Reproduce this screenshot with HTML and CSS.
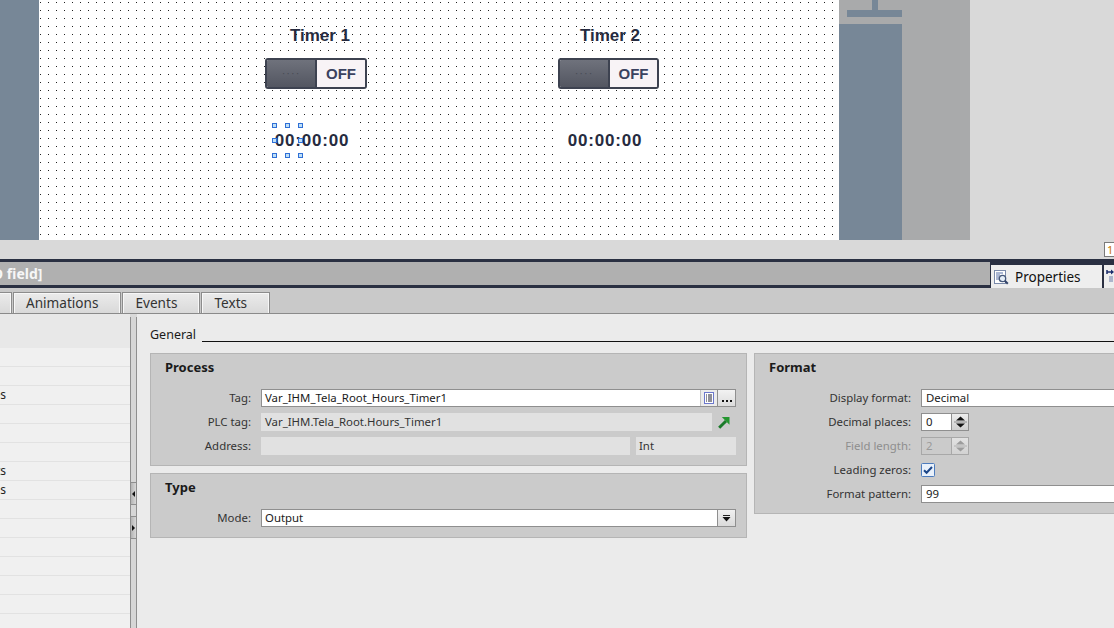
FILE: index.html
```html
<!DOCTYPE html>
<html lang="en">
<head>
<meta charset="utf-8">
<title>HMI editor - IO field properties</title>
<link rel="stylesheet" href="styles.css">
</head>
<body>
<div class="app">
  <div class="editor">
    <div class="editor-row">
      <div class="side-strip"></div>
      <div class="canvas">
        <div class="hmi-label t1">Timer 1</div>
        <div class="hmi-switch s1"><span class="sw-knob">····</span><span class="sw-state">OFF</span></div>
        <div class="hmi-io f1">00:00:00</div>
        <div class="selection">
          <span class="h h-tl"></span><span class="h h-tc"></span><span class="h h-tr"></span>
          <span class="h h-ml"></span><span class="h h-mr"></span>
          <span class="h h-bl"></span><span class="h h-bc"></span><span class="h h-br"></span>
        </div>
        <div class="hmi-label t2">Timer 2</div>
        <div class="hmi-switch s2"><span class="sw-knob">····</span><span class="sw-state">OFF</span></div>
        <div class="hmi-io f2">00:00:00</div>
      </div>
      <div class="ruler">
        <div class="ruler-stem"></div>
        <div class="ruler-bar"></div>
        <div class="ruler-col"></div>
      </div>
      <div class="editor-fill"></div>
    </div>
    <div class="editor-foot"><span class="zoom-box">1</span></div>
  </div>

  <div class="rule-dark"></div>
  <div class="titlebar">
    <div class="title"><span>[IO field]</span></div>
    <div class="ptab">
      <svg width="16" height="16" viewBox="0 0 16 16">
        <rect x="1.5" y="1.5" width="11" height="13" fill="#fff" stroke="#7b8bab"/>
        <path d="M3 4h7M3 6h4M3 8h3M3 10h3" stroke="#5870a8"/>
        <circle cx="9.5" cy="9.5" r="3.2" fill="#e4edf7" stroke="#46587a" stroke-width="1.3"/>
        <path d="M11.8 11.8l3 3" stroke="#34456a" stroke-width="2"/>
      </svg>
      <span>Properties</span>
    </div>
    <div class="ptab2">
      <svg width="10" height="14" viewBox="0 0 10 14">
        <path d="M1 1v4" stroke="#1b2d6b" stroke-width="1.5"/>
        <path d="M1 3h5" stroke="#1b2d6b" stroke-width="1.5"/>
        <path d="M5 0.5 8 3 5 5.5z" fill="#1b2d6b"/>
        <path d="M3 8h4M3 10h4M3 12h4" stroke="#6a7aa8"/>
      </svg>
    </div>
  </div>

  <div class="tabstrip">
    <div class="tab tab-first">Properties</div>
    <div class="tab">Animations</div>
    <div class="tab">Events</div>
    <div class="tab">Texts</div>
  </div>

  <div class="content">
    <nav class="nav">
      <div class="nav-head"></div>
      <div class="nav-row"></div>
      <div class="nav-row"></div>
      <div class="nav-row"><span>Styles</span></div>
      <div class="nav-row"></div>
      <div class="nav-row"></div>
      <div class="nav-row"></div>
      <div class="nav-row"><span>Limits</span></div>
      <div class="nav-row"><span>Designs</span></div>
      <div class="nav-row"></div>
      <div class="nav-row"></div>
      <div class="nav-row"></div>
      <div class="nav-row"></div>
      <div class="nav-row"></div>
      <div class="nav-row"></div>
      <div class="nav-row"></div>
    </nav>
    <div class="splitter">
      <div class="split-btn b1"><span class="arr-left"></span></div>
      <div class="split-btn b2"><span class="arr-right"></span></div>
    </div>
    <main class="main">
      <div class="section-head"><span>General</span><span class="section-line"></span></div>
      <div class="groups">
        <div class="col">
          <section class="group">
            <div class="group-title">Process</div>
            <div class="form">
              <div class="lbl">Tag:</div>
              <div class="field-row">
                <div class="combo">
                  <span class="val">Var_IHM_Tela_Root_Hours_Timer1</span>
                  <span class="listbtn">
                    <svg width="10" height="12" viewBox="0 0 10 12"><rect x="0.5" y="0.5" width="9" height="11" fill="#fff" stroke="#6c78cc"/><path d="M2 3h1M4 3h4M2 5h1M4 5h4M2 7h1M4 7h4M2 9h1M4 9h4" stroke="#1e1e2e"/></svg>
                  </span>
                </div>
                <span class="dotbtn">
                  <svg width="12" height="4" viewBox="0 0 12 4"><rect x="1" y="1" width="2" height="2" fill="#111"/><rect x="5" y="1" width="2" height="2" fill="#111"/><rect x="9" y="1" width="2" height="2" fill="#111"/></svg>
                </span>
              </div>

              <div class="lbl">PLC tag:</div>
              <div class="field-row">
                <div class="ro plc">Var_IHM.Tela_Root.Hours_Timer1</div>
                <svg class="goto" width="12" height="13" viewBox="0 0 12 13"><path d="M1.2 11.8 8 5" stroke="#1a7a29" stroke-width="3"/><path d="M3.8 1h7.7v7.7z" fill="#24962f"/></svg>
              </div>

              <div class="lbl">Address:</div>
              <div class="field-row">
                <div class="ro addr"></div>
                <div class="ro dtype">Int</div>
              </div>
            </div>
          </section>

          <section class="group">
            <div class="group-title">Type</div>
            <div class="form">
              <div class="lbl">Mode:</div>
              <div class="field-row">
                <div class="combo">
                  <span class="val">Output</span>
                  <span class="ddbtn"><svg width="9" height="7" viewBox="0 0 9 7"><path d="M1 0.5h7" stroke="#222"/><path d="M0.5 2h8L4.5 6.5z" fill="#111"/></svg></span>
                </div>
              </div>
            </div>
          </section>
        </div>

        <section class="group format">
          <div class="group-title">Format</div>
          <div class="form">
            <div class="lbl">Display format:</div>
            <div class="input">Decimal</div>

            <div class="lbl">Decimal places:</div>
            <div class="spin">
              <div class="input small">0</div>
              <span class="spinbtn"><svg width="15" height="16" viewBox="0 0 15 16"><path d="M3 6.5 7.5 2.5 12 6.5z M3 9.5 7.5 13.5 12 9.5z" fill="#111"/><path d="M1 8h13" stroke="#8a8a8a"/></svg></span>
            </div>

            <div class="lbl disabled">Field length:</div>
            <div class="spin dis">
              <div class="input small">2</div>
              <span class="spinbtn"><svg width="15" height="16" viewBox="0 0 15 16"><path d="M3 6.5 7.5 2.5 12 6.5z M3 9.5 7.5 13.5 12 9.5z" fill="#9c9c9c"/><path d="M1 8h13" stroke="#b0b0b0"/></svg></span>
            </div>

            <div class="lbl">Leading zeros:</div>
            <div class="check-cell">
              <svg width="14" height="14" viewBox="0 0 14 14"><rect x="0.5" y="0.5" width="13" height="13" rx="1" fill="#e9f1fb" stroke="#4d7cbd"/><path d="M3 7.2l2.6 2.6L11 4" fill="none" stroke="#1c4688" stroke-width="2"/></svg>
            </div>

            <div class="lbl">Format pattern:</div>
            <div class="input">99</div>
          </div>
        </section>
      </div>
    </main>
  </div>
</div>
</body>
</html>
```

FILE: styles.css
```css
html, body {
  margin: 0;
  padding: 0;
}
body {
  width: 1114px;
  height: 628px;
  overflow: hidden;
  background: #d9d9d9;
  font-family: "Noto Sans", "Liberation Sans", sans-serif;
}
.app {
  display: flex;
  flex-direction: column;
  height: 628px;
}

/* ---------- screen editor ---------- */
.editor {
  height: 259px;
  display: flex;
  flex-direction: column;
}
.editor-row {
  height: 240px;
  display: flex;
}
.side-strip {
  width: 39px;
  background: #778797;
}
.canvas {
  width: 800px;
  position: relative;
  background-color: #fff;
  background-image:
    linear-gradient(to right, transparent 1px, #fff 1px),
    linear-gradient(to bottom, #202020 1px, #fff 1px);
  background-size: 8px 8px;
  background-position: 1px 2px;
}
.ruler {
  width: 131px;
  background: #a9aaab;
  display: flex;
  flex-direction: column;
}
.ruler-stem {
  width: 6px;
  height: 10px;
  margin-left: 33px;
  background: #778797;
}
.ruler-bar {
  width: 55px;
  height: 7px;
  margin-left: 8px;
  background: #778797;
}
.ruler-col {
  width: 63px;
  flex: 1;
  margin-top: 7px;
  background: #778797;
}
.editor-fill {
  flex: 1;
}
.editor-foot {
  height: 19px;
  display: flex;
  justify-content: flex-end;
  align-items: flex-start;
  padding-top: 2px;
  box-sizing: border-box;
}
.zoom-box {
  width: 14px;
  height: 13px;
  margin-right: -8px;
  border: 1px solid #7a7a7a;
  background: #fff;
  color: #c87400;
  font-size: 11px;
  line-height: 13px;
  padding-left: 2px;
}

/* HMI objects on the free canvas */
.hmi-label {
  position: absolute;
  top: 26px;
  width: 100px;
  text-align: center;
  font-family: "Liberation Sans", sans-serif;
  font-weight: bold;
  font-size: 17px;
  line-height: 20px;
  color: #262b40;
}
.t1 { left: 231px; }
.t2 { left: 521px; }

.hmi-switch {
  position: absolute;
  top: 58px;
  height: 31px;
  box-sizing: border-box;
  border: 2px solid #3d4250;
  border-radius: 3px;
  display: flex;
  overflow: hidden;
  font-family: "Liberation Sans", sans-serif;
}
.s1 { left: 226px; width: 102px; }
.s2 { left: 519px; width: 101px; }
.sw-knob {
  width: 48px;
  background: linear-gradient(#6f727c, #535661);
  border-right: 2px solid #3d4250;
  color: #484b55;
  font-size: 11px;
  line-height: 27px;
  text-align: center;
  letter-spacing: 1px;
}
.sw-state {
  flex: 1;
  background: #f8f3f6;
  color: #3b4260;
  font-weight: bold;
  font-size: 15px;
  line-height: 27px;
  text-align: center;
}

.hmi-io {
  position: absolute;
  top: 121px;
  width: 94px;
  height: 39px;
  background: #fff;
  text-align: center;
  font-family: "Liberation Sans", sans-serif;
  font-weight: bold;
  font-size: 17px;
  letter-spacing: 0.8px;
  line-height: 39px;
  color: #262b40;
}
.f1 { left: 226px; }
.f2 { left: 519px; }

.selection {
  position: absolute;
  left: 235px;
  top: 125px;
  width: 26px;
  height: 31px;
}
.h {
  position: absolute;
  width: 5px;
  height: 5px;
  background: #bfe0f7;
  border: 1px solid #2f6fd6;
  box-sizing: border-box;
}
.h-tl { left: -2px; top: -2px; }
.h-tc { left: 11px; top: -2px; }
.h-tr { left: 24px; top: -2px; }
.h-ml { left: -2px; top: 13px; }
.h-mr { left: 24px; top: 13px; }
.h-bl { left: -2px; top: 28px; }
.h-bc { left: 11px; top: 28px; }
.h-br { left: 24px; top: 28px; }

/* ---------- inspector header ---------- */
.rule-dark {
  height: 3px;
  background: #2a3042;
}
.titlebar {
  height: 26px;
  display: flex;
}
.title {
  flex: 1;
  background: #b0b0b0;
  border-bottom: 3px solid #2a3042;
  color: #f7f7f7;
  font-size: 14px;
  font-weight: bold;
  line-height: 23px;
  overflow: hidden;
  white-space: nowrap;
}
.title span {
  display: inline-block;
  margin-left: -18px;
}
.ptab {
  width: 112px;
  flex: none;
  box-sizing: border-box;
  border-top: 3px solid #2a3042;
  border-left: 1px solid #2a3042;
  background: #eeeeee;
  display: flex;
  align-items: center;
  gap: 6px;
  padding-left: 2px;
  font-size: 13.5px;
  color: #111;
}
.ptab2 {
  width: 12px;
  flex: none;
  box-sizing: border-box;
  border-top: 3px solid #2a3042;
  border-left: 2px solid #2a3042;
  background: #eeeeee;
  padding: 1px 0 0 2px;
  overflow: hidden;
}

.tabstrip {
  height: 26px;
  box-sizing: border-box;
  background: #c9c9c9;
  border-bottom: 1px solid #8a8a8a;
  display: flex;
  align-items: flex-end;
  gap: 1px;
  overflow: hidden;
}
.tab {
  height: 21px;
  box-sizing: border-box;
  border: 1px solid #8c8c8c;
  border-bottom: none;
  box-shadow: inset 1px 1px 0 #f7f7f7, inset -1px 0 0 #f7f7f7;
  background: linear-gradient(#ebebeb, #d9d9d9);
  padding: 0 22px 0 12px;
  font-size: 13.6px;
  line-height: 19px;
  color: #333;
  white-space: nowrap;
  flex: none;
}
.tab-first {
  margin-left: -90px;
  width: 102px;
}

/* ---------- inspector body ---------- */
.content {
  flex: 1;
  display: flex;
  min-height: 0;
}
.nav {
  width: 130px;
  background: #f0f0f0;
  overflow: hidden;
}
.nav-head {
  height: 34px;
  background: #e8e8e8;
}
.nav-row {
  height: 19px;
  box-sizing: border-box;
  border-bottom: 1px solid #e2e2e2;
  font-size: 12px;
  line-height: 18px;
  white-space: nowrap;
}
.nav-row span {
  display: block;
  width: 120px;
  margin-left: -114px;
  text-align: right;
  color: #222;
}
.splitter {
  width: 7px;
  box-sizing: border-box;
  margin-top: 3px;
  border-left: 1px solid #8e8e8e;
  border-right: 1px solid #8e8e8e;
  background: #d6d6d6;
  display: flex;
  flex-direction: column;
}
.split-btn {
  height: 23px;
  box-sizing: border-box;
  border-top: 1px solid #8e8e8e;
  border-bottom: 1px solid #8e8e8e;
  background: linear-gradient(to right, #b4b4b4, #d8d8d8);
  display: flex;
  align-items: center;
}
.b1 { margin-top: 165px; }
.b2 { margin-top: 11px; }
.arr-left {
  width: 0;
  height: 0;
  border-top: 3px solid transparent;
  border-bottom: 3px solid transparent;
  border-right: 3px solid #111;
  margin-left: 1px;
}
.arr-right {
  width: 0;
  height: 0;
  border-top: 3px solid transparent;
  border-bottom: 3px solid transparent;
  border-left: 3px solid #111;
  margin-left: 1px;
}

.main {
  flex: 1;
  background: #ebebeb;
  padding: 13px 0 0 13px;
  overflow: hidden;
}
.section-head {
  display: flex;
  height: 16px;
  font-size: 12.5px;
  line-height: 16px;
  color: #1a1a1a;
}
.section-line {
  flex: 1;
  align-self: flex-end;
  border-top: 1px solid #111;
  margin: 0 0 1px 6px;
}
.groups {
  display: grid;
  grid-template-columns: 597px 597px;
  column-gap: 7px;
  margin-top: 10px;
  align-items: start;
  width: 1201px;
}
.col {
  display: flex;
  flex-direction: column;
  gap: 7px;
}
.group {
  box-sizing: border-box;
  background: #cbcbcb;
  border: 1px solid #b5b5b5;
  padding: 5px 10px 10px 0;
}
.group-title {
  font-weight: bold;
  font-size: 13px;
  line-height: 16px;
  margin: 0 0 14px 14px;
  color: #1a1a1a;
}
.form {
  display: grid;
  grid-template-columns: 100px 1fr;
  grid-auto-rows: 18px;
  column-gap: 10px;
  row-gap: 6px;
}
.format .form {
  grid-template-columns: 156px 1fr;
}
.lbl {
  text-align: right;
  font-size: 11.4px;
  line-height: 18px;
  color: #333;
  white-space: nowrap;
}
.lbl.disabled {
  color: #8e8e8e;
}
.field-row {
  display: flex;
  align-items: center;
  min-width: 0;
}
.combo {
  flex: 1;
  height: 18px;
  box-sizing: border-box;
  display: flex;
  background: #fff;
  border: 1px solid #8f8f8f;
  min-width: 0;
}
.val {
  flex: 1;
  font-size: 11.4px;
  line-height: 16px;
  padding-left: 3px;
  color: #1a1a1a;
  white-space: nowrap;
  overflow: hidden;
}
.listbtn {
  width: 16px;
  background: #ececec;
  border-left: 1px solid #c4c4c4;
  display: flex;
  align-items: center;
  justify-content: center;
}
.dotbtn {
  width: 18px;
  height: 18px;
  box-sizing: border-box;
  border: 1px solid #8f8f8f;
  border-left: none;
  background: linear-gradient(#f2f2f2, #dcdcdc);
  display: flex;
  align-items: flex-end;
  justify-content: center;
  padding-bottom: 3px;
}
.ddbtn {
  width: 17px;
  border-left: 1px solid #8f8f8f;
  background: linear-gradient(#f0f0f0, #dadada);
  display: flex;
  align-items: center;
  justify-content: center;
}
.ro {
  height: 18px;
  box-sizing: border-box;
  background: #e1e1e1;
  font-size: 11.4px;
  line-height: 18px;
  padding-left: 4px;
  color: #333;
  white-space: nowrap;
}
.plc { width: 451px; }
.goto { margin-left: 6px; }
.addr { width: 369px; margin-right: 6px; }
.dtype { width: 100px; padding-left: 3px; }

.input {
  height: 18px;
  box-sizing: border-box;
  background: #fff;
  border: 1px solid #8f8f8f;
  font-size: 11.4px;
  line-height: 16px;
  padding-left: 4px;
  color: #1a1a1a;
  white-space: nowrap;
}
.spin {
  display: flex;
}
.input.small {
  width: 31px;
}
.spinbtn {
  width: 17px;
  height: 18px;
  box-sizing: border-box;
  border: 1px solid #8f8f8f;
  border-left: none;
  background: linear-gradient(#ededed, #cfcfcf);
  display: flex;
  align-items: center;
  justify-content: center;
}
.spin.dis .input {
  background: #cbcbcb;
  border-color: #a8a8a8;
  color: #9a9a9a;
}
.spin.dis .spinbtn {
  border-color: #a8a8a8;
  background: linear-gradient(#e2e2e2, #d2d2d2);
}
.check-cell {
  display: flex;
  align-items: center;
}
```
